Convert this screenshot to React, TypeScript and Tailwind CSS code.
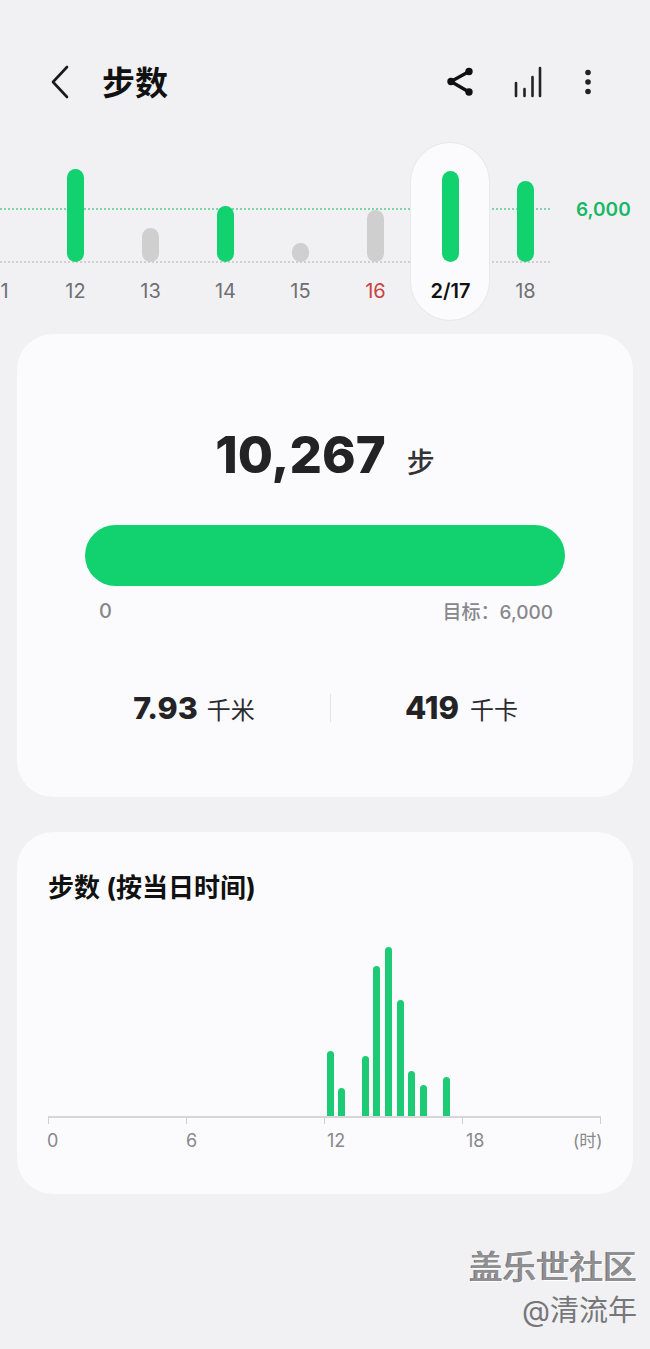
const DAYS = [
  { label: "11", height: 0, color: "", text: "text-[#6f6f73]" },
  { label: "12", height: 93, color: "bg-[#12d16f]", text: "text-[#6f6f73]" },
  { label: "13", height: 34, color: "bg-[#cfcfcf]", text: "text-[#6f6f73]" },
  { label: "14", height: 56, color: "bg-[#12d16f]", text: "text-[#6f6f73]" },
  { label: "15", height: 19, color: "bg-[#cfcfcf]", text: "text-[#6f6f73]" },
  { label: "16", height: 52, color: "bg-[#cfcfcf]", text: "text-[#c9433f]" },
  { label: "2/17", height: 91, color: "bg-[#12d16f]", text: "text-[#111111] font-semibold" },
  { label: "18", height: 81, color: "bg-[#12d16f]", text: "text-[#6f6f73]" },
];

// half hour slots, only the ones with steps
const HOURS: Record<number, number> = {
  24: 65,
  25: 28,
  27: 60,
  28: 150,
  29: 169,
  30: 116,
  31: 45,
  32: 31,
  34: 39,
};

const TICKS = [
  { label: "0", cls: "w-[139px]" },
  { label: "6", cls: "w-[141px]" },
  { label: "12", cls: "w-[139px]" },
  { label: "18", cls: "w-[107px]" },
];

const FONT = "font-['Inter','Noto_Sans_CJK_SC',sans-serif]";

export default function App() {
  return (
    <div className={`h-[1349px] w-[650px] overflow-hidden bg-[#f1f1f4] ${FONT}`}>
      <header className="flex h-[143px] items-center pt-[21px]">
        <svg width="20" height="34" viewBox="0 0 20 34" className="ml-[50px]" fill="none" stroke="#1a1a1a" strokeWidth="2.6" strokeLinecap="round" strokeLinejoin="round">
          <path d="M17 2 L3 17 L17 32" />
        </svg>
        <h1 className="mt-[3px] ml-[32px] text-[33px] leading-none font-bold text-[#111111]">步数</h1>
        <div className="ml-auto flex items-center">
          <svg width="28" height="30" viewBox="0 0 28 30" fill="#111111" stroke="#111111" strokeWidth="3.4">
            <path d="M23 4.5 L5 14.5 L23 25" fill="none" />
            <circle cx="23" cy="4.5" r="3" strokeWidth="1.4" />
            <circle cx="5" cy="14.5" r="3" strokeWidth="1.4" />
            <circle cx="23" cy="25" r="3" strokeWidth="1.4" />
          </svg>
          <svg width="30" height="32" viewBox="0 0 30 32" className="ml-[38px]" fill="none" stroke="#222222" strokeWidth="2.6" strokeLinecap="round">
            <path d="M4 30 V17 M12.5 30 V23 M20.5 30 V11 M28 30 V2" />
          </svg>
          <svg width="8" height="26" viewBox="0 0 8 26" className="mr-[58px] ml-[42px]" fill="#222222">
            <circle cx="4" cy="3.5" r="2.8" />
            <circle cx="4" cy="13" r="2.8" />
            <circle cx="4" cy="22.5" r="2.8" />
          </svg>
        </div>
      </header>

      <section className="relative h-[177px]">
        <div className="absolute top-[65px] left-0 w-[550px] border-t-2 border-dotted border-[#7fd3a6]" />
        <div className="absolute top-[118px] left-0 w-[550px] border-t-2 border-dotted border-[#cfcfd2]" />
        <span className="absolute top-[55px] left-[576px] text-[19px] leading-6 font-semibold text-[#17b866]">6,000</span>
        <div className="relative -ml-[37px] flex h-full">
          {DAYS.map((d) => (
            <div key={d.label} className="relative flex h-full w-[75px] shrink-0 flex-col items-center">
              {d.label === "2/17" ? (
                <div className="absolute inset-y-0 -left-[2px] w-[78px] rounded-full bg-[#fbfbfd] ring-1 ring-[#e8e8eb]" />
              ) : null}
              <div className="relative flex h-[119px] items-end">
                <div className={`w-[17px] rounded-full ${d.color}`} style={{ height: d.height }} />
              </div>
              <span className={`relative mt-[17px] text-[20px] leading-6 ${d.text}`}>{d.label}</span>
            </div>
          ))}
        </div>
      </section>

      <section className="mx-[17px] mt-[14px] h-[463px] rounded-[36px] bg-[#fbfbfe] px-[68px] pt-[90px]">
        <div className="flex h-[62px] items-baseline justify-center">
          <span className="text-[51px] leading-[62px] font-extrabold text-[#232326]">10,267</span>
          <span className="ml-[21px] text-[28px] leading-none font-medium text-[#333336]">步</span>
        </div>
        <div className="mt-[39px] h-[61px] rounded-full bg-[#12d16f]" />
        <div className="flex items-center justify-between pr-[12px] pl-[14px]">
          <span className="mt-[11px] text-[20px] leading-6 font-medium text-[#88888c]">0</span>
          <span className="mt-[15px] text-[19px] leading-6 font-medium text-[#88888c]">目标：6,000</span>
        </div>
        <div className="mt-[65px] flex items-center">
          <div className="flex w-[245px] items-baseline justify-center pr-[27px]">
            <span className="text-[30.5px] leading-9 font-extrabold text-[#232326]">7.93</span>
            <span className="ml-[9px] text-[24px] leading-none text-[#2b2b2e]">千米</span>
          </div>
          <div className="h-[28px] w-px bg-[#e4e4e7]" />
          <div className="flex flex-1 items-baseline justify-center pl-[27px]">
            <span className="text-[31px] leading-9 font-extrabold text-[#232326]">419</span>
            <span className="ml-[11px] text-[24px] leading-none text-[#2b2b2e]">千卡</span>
          </div>
        </div>
      </section>

      <section className="mx-[17px] mt-[35px] h-[362px] rounded-[36px] bg-[#fbfbfe] pt-[39px] pl-[31px]">
        <h2 className="text-[26px] leading-[34px] font-bold text-[#111111]">步数 (按当日时间)</h2>
        <div className="mt-[39px] flex h-[172px] w-[552px] items-end">
          {Array.from({ length: 48 }, (_, i) => (
            <div key={i} className="flex w-[11.67px] shrink-0 justify-start">
              {HOURS[i] ? (
                <div className="-ml-px w-[7px] rounded-t-full bg-[#1ccb73]" style={{ height: HOURS[i] }} />
              ) : null}
            </div>
          ))}
        </div>
        <div className="flex h-[8px] w-[553px] justify-between border-t-2 border-[#d6d6d9]">
          {[0, 1, 2, 3, 4].map((t) => (
            <div key={t} className="h-[6px] w-[1px] bg-[#d0d0d3]" />
          ))}
        </div>
        <div className="mt-[6px] -ml-px flex w-[556px] text-[18px] leading-[22px] text-[#88888c]">
          {TICKS.map((t) => (
            <span key={t.label} className={`${t.cls} shrink-0`}>
              {t.label}
            </span>
          ))}
          <span className="text-[17px]">(时)</span>
        </div>
      </section>

      <footer className="mt-[54px] flex flex-col items-end pr-[13px] text-[#8a8a8c]">
        <span className="text-[33.5px] leading-[38px] font-medium text-[#8f8f91] [text-shadow:1px_1px_0_#ffffff,-1px_0_0_#6f6f71]">盖乐世社区</span>
        <span className="mt-[8px] text-[29px] leading-[34px] text-[#777779]">@清流年</span>
      </footer>
    </div>
  );
}
